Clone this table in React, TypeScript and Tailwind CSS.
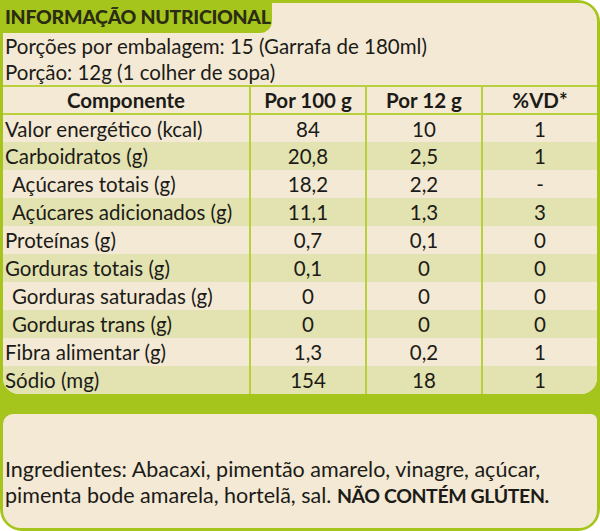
const rows: { name: string; indent?: boolean; a: string; b: string; c: string }[] = [
  { name: "Valor energético (kcal)", a: "84", b: "10", c: "1" },
  { name: "Carboidratos (g)", a: "20,8", b: "2,5", c: "1" },
  { name: "Açúcares totais (g)", indent: true, a: "18,2", b: "2,2", c: "-" },
  { name: "Açúcares adicionados (g)", indent: true, a: "11,1", b: "1,3", c: "3" },
  { name: "Proteínas (g)", a: "0,7", b: "0,1", c: "0" },
  { name: "Gorduras totais (g)", a: "0,1", b: "0", c: "0" },
  { name: "Gorduras saturadas (g)", indent: true, a: "0", b: "0", c: "0" },
  { name: "Gorduras trans (g)", indent: true, a: "0", b: "0", c: "0" },
  { name: "Fibra alimentar (g)", a: "1,3", b: "0,2", c: "1" },
  { name: "Sódio (mg)", a: "154", b: "18", c: "1" },
];

export default function App() {
  return (
    <div
      className="flex h-[531px] w-[600px] flex-col rounded-tr-[22px] rounded-b-[22px] bg-[#a6c51c] p-[3px] text-[20.5px] leading-[26px] text-[#1c1b17]"
      style={{ fontFamily: "Lato, 'Open Sans', sans-serif" }}
    >
      <div className="overflow-hidden rounded-tr-[18px] rounded-b-[16px] bg-[#f3e9d5]">
        <div className="-ml-[3px] -mt-[3px] flex h-[33px] w-[272px] items-center whitespace-nowrap rounded-br-[12px] bg-[#a6c51c] pl-[5px] text-[19.5px] font-black tracking-[-0.3px] text-[#2b2d12]">
          INFORMAÇÃO NUTRICIONAL
        </div>
        <p className="pl-[2px]">Porções por embalagem: 15 (Garrafa de 180ml)</p>
        <p className="pl-[2px]">Porção: 12g (1 colher de sopa)</p>
        <table className="w-full border-collapse">
          <colgroup>
            <col className="w-[247px]" />
            <col className="w-[116px]" />
            <col className="w-[116px]" />
            <col />
          </colgroup>
          <thead>
            <tr className="h-[28px] border-y-2 border-[#b8d03c] font-bold">
              <th className="text-center">Componente</th>
              <th className="border-l-2 border-[#b8d03c] text-center">Por 100 g</th>
              <th className="border-l-2 border-[#b8d03c] text-center">Por 12 g</th>
              <th className="border-l-2 border-[#b8d03c] text-center">%VD*</th>
            </tr>
          </thead>
          <tbody>
            {rows.map((r, i) => (
              <tr key={r.name} className={`h-[28px] ${i % 2 === 1 ? "bg-[#e3e2b1]" : ""}`}>
                <td className={r.indent ? "pl-[9px]" : "pl-[2px]"}>{r.name}</td>
                <td className="border-l-2 border-[#b8d03c] text-center">{r.a}</td>
                <td className="border-l-2 border-[#b8d03c] text-center">{r.b}</td>
                <td className="border-l-2 border-[#b8d03c] text-center">{r.c}</td>
              </tr>
            ))}
          </tbody>
        </table>
      </div>
      <div className="mt-[20px] flex-1 rounded-tl-[10px] rounded-tr-[6px] rounded-b-[18px] bg-[#f3e9d5] pl-[2px] pt-[42px] text-[21.5px]">
        <p>Ingredientes: Abacaxi, pimentão amarelo, vinagre, açúcar,</p>
        <p>
          pimenta bode amarela, hortelã, sal.{" "}
          <b className="text-[19.5px] tracking-[-0.4px]">NÃO CONTÉM GLÚTEN.</b>
        </p>
      </div>
    </div>
  );
}
